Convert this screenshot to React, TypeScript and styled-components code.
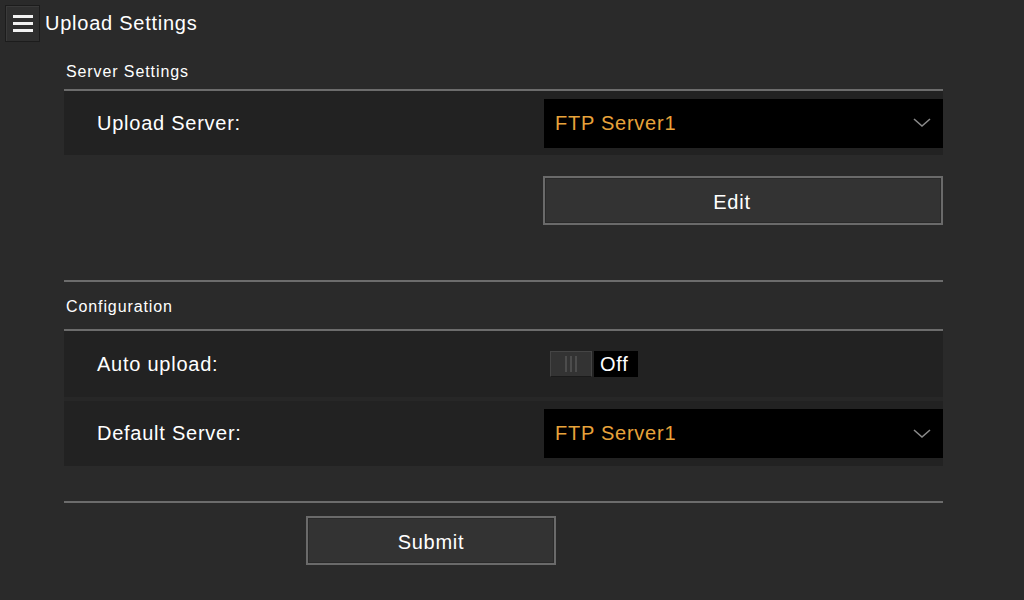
import React from "react";
import styled, { createGlobalStyle } from "styled-components";

const GlobalStyle = createGlobalStyle`
	html, body {
		margin: 0;
		padding: 0;
		background: #2a2a2a;
	}
	body {
		font-family: "Liberation Sans", Arial, sans-serif;
		color: #ffffff;
		letter-spacing: 0.75px;
	}
`;

const Page = styled.div`
	width: 1024px;
	height: 600px;
	background: #2a2a2a;
	overflow: hidden;
`;

const Header = styled.div`
	display: flex;
	align-items: center;
	height: 44px;
	padding-left: 5px;
	gap: 5px;
`;

const MenuButton = styled.button`
	width: 35px;
	height: 37px;
	margin-top: 2px;
	padding: 0;
	display: flex;
	flex-direction: column;
	align-items: center;
	justify-content: center;
	gap: 4px;
	background: #2f2f2f;
	border: 1px solid #1c1c1c;
	box-shadow: inset 1px 1px 0 #3a3a3a;
`;

const Bar = styled.span`
	display: block;
	width: 20px;
	height: 3px;
	background: #f2f2f2;
`;

const Title = styled.h1`
	margin: 2px 0 0;
	font-size: 20px;
	font-weight: normal;
	line-height: 24px;
`;

const Content = styled.div`
	width: 879px;
	margin-left: 64px;
`;

const SectionTitle = styled.div<{ $top: number; $bottom: number }>`
	padding: ${p => p.$top}px 2px ${p => p.$bottom}px;
	font-size: 16px;
	letter-spacing: 0.9px;
	line-height: 20px;
	border-bottom: 2px solid #6c6c6c;
`;

const Divider = styled.div`
	height: 2px;
	background: #6c6c6c;
`;

const Row = styled.div<{ $height: number }>`
	display: grid;
	grid-template-columns: 480px 1fr;
	align-items: center;
	height: ${p => p.$height}px;
	background: #222222;
`;

const RowGap = styled.div`
	height: 4px;
	background: #272727;
`;

const Label = styled.div`
	padding-left: 33px;
	font-size: 20px;
`;

const Select = styled.div`
	display: flex;
	align-items: center;
	justify-content: space-between;
	height: 49px;
	padding: 0 12px 0 11px;
	background: #000000;
	color: #e8a33b;
	font-size: 20px;
`;

const Toggle = styled.div`
	display: flex;
	align-items: stretch;
	gap: 2px;
	height: 26px;
	margin-left: 6px;
`;

const Track = styled.div`
	width: 42px;
	background: #333333;
	border: 1px solid #454545;
	border-bottom-color: #1a1a1a;
	box-sizing: border-box;
	display: flex;
	justify-content: center;
	gap: 3px;
	padding: 4px 0;
`;

const Grip = styled.span`
	width: 2px;
	background: #4c4c4c;
`;

const ToggleText = styled.div`
	display: flex;
	align-items: center;
	width: 44px;
	box-sizing: border-box;
	padding-left: 6px;
	background: #000000;
	font-size: 20px;
`;

const ButtonArea = styled.div<{ $offset: number; $top: number; $bottom: number }>`
	padding: ${p => p.$top}px 0 ${p => p.$bottom}px ${p => p.$offset}px;
`;

const Button = styled.button<{ $width: number; $shift?: number }>`
	width: ${p => p.$width}px;
	height: 49px;
	background: #333333;
	border: 2px solid #6a6a6a;
	box-shadow: inset 0 0 0 1px #2a2a2a;
	color: #ffffff;
	font-family: "Liberation Sans", Arial, sans-serif;
	font-size: 20px;
	letter-spacing: 0.75px;
	padding: 3px ${p => p.$shift || 0}px 0 0;
`;

const Chevron = () => (
	<svg width="18" height="10" viewBox="0 0 18 10">
		<polyline points="1,1 9,8 17,1" fill="none" stroke="#8a8a8a" strokeWidth="1.6" />
	</svg>
);

const App: React.FC = () => {
	return (
		<Page>
			<GlobalStyle />
			<Header>
				<MenuButton>
					<Bar />
					<Bar />
					<Bar />
				</MenuButton>
				<Title>Upload Settings</Title>
			</Header>
			<Content>
				<SectionTitle $top={18} $bottom={7}>Server Settings</SectionTitle>
				<Row $height={64}>
					<Label>Upload Server:</Label>
					<Select>
						<span>FTP Server1</span>
						<Chevron />
					</Select>
				</Row>
				<ButtonArea $offset={479} $top={21} $bottom={55}>
					<Button $width={400} $shift={22}>Edit</Button>
				</ButtonArea>
				<Divider />
				<SectionTitle $top={15} $bottom={12}>Configuration</SectionTitle>
				<Row $height={66}>
					<Label>Auto upload:</Label>
					<Toggle>
						<Track>
							<Grip />
							<Grip />
							<Grip />
						</Track>
						<ToggleText>Off</ToggleText>
					</Toggle>
				</Row>
				<RowGap />
				<Row $height={65}>
					<Label>Default Server:</Label>
					<Select>
						<span>FTP Server1</span>
						<Chevron />
					</Select>
				</Row>
				<ButtonArea $offset={0} $top={35} $bottom={0}>
					<Divider />
				</ButtonArea>
				<ButtonArea $offset={242} $top={13} $bottom={0}>
					<Button $width={250}>Submit</Button>
				</ButtonArea>
			</Content>
		</Page>
	);
};

export default App;
